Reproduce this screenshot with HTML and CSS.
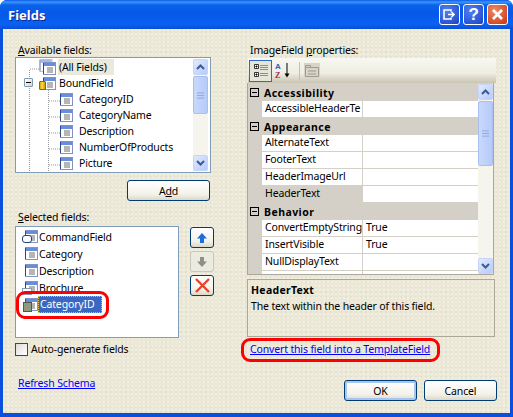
FILE: index.html
```html
<!DOCTYPE html>
<html lang="en">
<head>
<meta charset="utf-8">
<title>Fields</title>
<link rel="stylesheet" href="styles.css">
</head>
<body>
<svg class="defs" width="0" height="0" aria-hidden="true">
  <defs>
    <symbol id="doc" viewBox="0 0 13 13">
      <rect x=".5" y=".5" width="12" height="12" fill="#fff" stroke="#7f93c4"/>
      <rect x="1" y="1" width="11" height="3" fill="#6a8cdc"/>
      <path d="M4 6h6M4 8h6M4 10h6" stroke="#6d6d6d"/>
      <path d="M.5 1v11" stroke="#2c4a90"/>
    </symbol>
    <symbol id="arrow" viewBox="0 0 12 12">
      <path d="M6 1 11 6.500H8V11H4V6.500H1Z"/>
    </symbol>
    <symbol id="chev" viewBox="0 0 9 6">
      <path d="M1 5 4.500 1.500 8 5" fill="none" stroke="#3c5a94" stroke-width="2"/>
    </symbol>
    <symbol id="grip" viewBox="0 0 8 7">
      <path d="M0 .5h8M0 3.500h8M0 6.500h8" stroke="#8aa3dc"/>
    </symbol>
  </defs>
</svg>
<main class="window">
  <header class="titlebar">
    <h1 class="title">Fields</h1>
    <div class="caption-buttons">
      <span class="cap cap-blue"><svg width="13" height="11" viewBox="0 0 13 11"><path d="M8 2.500V1H1v9h7V8.500M5 5.500h6M8.500 3l2.500 2.500L8.500 8" fill="none" stroke="#fff" stroke-width="1.600"/></svg></span>
      <span class="cap cap-blue cap-help">?</span>
      <span class="cap cap-close"><svg width="13" height="13" viewBox="0 0 13 13"><path d="M2 2l9 9M11 2l-9 9" stroke="#fff" stroke-width="2.600"/></svg></span>
    </div>
  </header>
  <div class="content">
    <section class="left">
      <label class="lbl"><u>A</u>vailable fields:</label>
      <div class="box tree">
        <svg class="guides" width="60" height="116" aria-hidden="true"><path d="M13.500 12v103M14 11h10M33 27h-1M32.500 30v85M33 43h11M33 59h11M33 75h11M33 91h11M33 107h11" stroke="#9a9a9a" stroke-dasharray="1 1" fill="none"/></svg>
        <div class="tree-rows">
          <div class="trow t0"><svg class="ic ghost" width="14" height="13"><use href="#doc"/></svg><svg class="ic allf" width="13" height="13"><use href="#doc"/></svg><span class="tsel">(All Fields)</span></div>
          <div class="trow t0"><span class="minus"></span><span class="can"></span><svg class="ic boundf" width="13" height="13"><use href="#doc"/></svg><span class="ttxt">BoundField</span></div>
          <div class="trow t1"><svg class="ic" width="13" height="13"><use href="#doc"/></svg><span class="ttxt2">CategoryID</span></div>
          <div class="trow t1"><svg class="ic" width="13" height="13"><use href="#doc"/></svg><span class="ttxt2">CategoryName</span></div>
          <div class="trow t1"><svg class="ic" width="13" height="13"><use href="#doc"/></svg><span class="ttxt2">Description</span></div>
          <div class="trow t1"><svg class="ic" width="13" height="13"><use href="#doc"/></svg><span class="ttxt2">NumberOfProducts</span></div>
          <div class="trow t1"><svg class="ic" width="13" height="13"><use href="#doc"/></svg><span class="ttxt2">Picture</span></div>
        </div>
        <div class="sb sb-tree">
          <span class="sb-btn"><svg width="9" height="6"><use href="#chev"/></svg></span>
          <span class="sb-thumb thumb-tree"><svg width="7" height="7"><use href="#grip"/></svg></span>
          <span class="sb-fill"></span>
          <span class="sb-btn flip"><svg width="9" height="6"><use href="#chev"/></svg></span>
        </div>
      </div>
      <button class="btn btn-add" type="button">A<u>d</u>d</button>
      <label class="lbl lbl-sel"><u>S</u>elected fields:</label>
      <div class="sel-row">
        <div class="box list">
          <div class="lrow"><span class="lic"><svg class="ic" width="13" height="13"><use href="#doc"/></svg><i class="cmd"></i></span><span>CommandField</span></div>
          <div class="lrow"><span class="lic"><svg class="ic" width="13" height="13"><use href="#doc"/></svg></span><span>Category</span></div>
          <div class="lrow"><span class="lic"><svg class="ic" width="13" height="13"><use href="#doc"/></svg></span><span>Description</span></div>
          <div class="lrow"><span class="lic"><svg class="ic" width="13" height="13"><use href="#doc"/></svg><i class="img"></i></span><span>Brochure</span></div>
          <div class="lrow"><span class="lic"><svg class="ic" width="13" height="13"><use href="#doc"/></svg><i class="tpl"></i></span><span class="lsel">CategoryID</span></div>
        </div>
        <div class="movers">
          <button class="mv" type="button"><svg class="up" width="12" height="12"><use href="#arrow"/></svg></button>
          <button class="mv mv-off" type="button"><svg class="down" width="12" height="12"><use href="#arrow"/></svg></button>
          <button class="mv" type="button"><svg width="17" height="17" viewBox="0 0 17 17"><path d="M2 2l13 13M15 2 2 15" stroke="#e8432a" stroke-width="2.400"/></svg></button>
        </div>
      </div>
      <div class="auto"><span class="check"></span><span>Auto-generate fields</span></div>
      <a class="link refresh" href="#">Refresh Schema</a>
    </section>
    <section class="right">
      <label class="lbl lbl-r">ImageField <u>p</u>roperties:</label>
      <div class="toolbar">
        <span class="tool tool-on">
          <svg width="14" height="14" viewBox="0 0 14 14"><path d="M.5.5h4v4h-4zM.5 8.500h4v4h-4z" fill="#fff" stroke="#333"/><path d="M1.500 2.500h2M2.500 1.500v2M1.500 10.500h2M2.500 9.500v2" stroke="#000"/><path d="M6 1.500h8M6 3.500h8M6 5.500h8M6 9.500h8M6 11.500h8" stroke="#7d8fb3"/></svg>
        </span>
        <span class="tool tool-az">
          <svg width="16" height="17" viewBox="0 0 16 17"><text x="0" y="7" class="az-a">A</text><text x="0" y="16" class="az-z">Z</text><path d="M12 1v12" stroke="#000"/><path d="M9.500 11.500h5L12 15.500z"/></svg>
        </span>
        <span class="tool-sep"></span>
        <span class="tool tool-off">
          <svg width="14" height="12" viewBox="0 0 14 12"><path d="M.5 2.500h13v9H.5zM.5.500h5v2h-5z" fill="#d8d4c6" stroke="#9c9c94"/><path d="M3 6h8M3 9h8" stroke="#9c9c94"/></svg>
        </span>
      </div>
      <div class="grid">
        <div class="grows">
          <div class="gcat"><span class="gmin"></span><b>Accessibility</b></div>
          <div class="grow"><span class="gn">AccessibleHeaderTe</span><span class="gv"></span></div>
          <div class="gcat"><span class="gmin"></span><b>Appearance</b></div>
          <div class="grow"><span class="gn">AlternateText</span><span class="gv"></span></div>
          <div class="grow"><span class="gn">FooterText</span><span class="gv"></span></div>
          <div class="grow"><span class="gn">HeaderImageUrl</span><span class="gv"></span></div>
          <div class="grow grow-sel"><span class="gn">HeaderText</span><span class="gv"></span></div>
          <div class="gcat"><span class="gmin"></span><b>Behavior</b></div>
          <div class="grow"><span class="gn">ConvertEmptyString</span><span class="gv">True</span></div>
          <div class="grow"><span class="gn">InsertVisible</span><span class="gv">True</span></div>
          <div class="grow"><span class="gn">NullDisplayText</span><span class="gv"></span></div>
          <div class="grow"><span class="gn"></span><span class="gv"></span></div>
        </div>
        <div class="sb sb-grid">
          <span class="sb-btn"><svg width="9" height="6"><use href="#chev"/></svg></span>
          <span class="sb-thumb thumb-grid"><svg width="7" height="7"><use href="#grip"/></svg></span>
          <span class="sb-fill"></span>
          <span class="sb-btn flip"><svg width="9" height="6"><use href="#chev"/></svg></span>
        </div>
      </div>
      <div class="desc">
        <b>HeaderText</b>
        <p>The text within the header of this field.</p>
      </div>
      <a class="link convert" href="#">Convert this field into a TemplateField</a>
      <div class="actions">
        <button class="btn btn-act btn-default" type="button">OK</button>
        <button class="btn btn-act" type="button">Cancel</button>
      </div>
    </section>
    <span class="ring ring-item"></span>
    <span class="ring ring-link"></span>
  </div>
</main>
</body>
</html>
```
FILE: styles.css
```css
* { box-sizing: border-box; }
html, body { margin: 0; padding: 0; background: #fff; }
body { width: 513px; height: 417px; overflow: hidden; font: 10.5px/14px "Noto Sans", "DejaVu Sans", sans-serif; letter-spacing: -.15px; color: #000; }
.defs { position: absolute; }
.window { width: 513px; height: 417px; display: flex; flex-direction: column; background: #0a50dc; border-radius: 7px 7px 0 0; overflow: hidden; padding: 0 3px 4px; }
.titlebar { height: 29px; margin: 0 -3px; flex: none; display: flex; align-items: center; justify-content: space-between; padding: 0 5px 0 8px; background: linear-gradient(#0a5ae6 0, #3d95ff 2px, #0a62ea 5px, #0558e8 14px, #0a62f2 24px, #0a4fd8 29px); }
.title { margin: 0; font: bold 13px/18px "Noto Sans", sans-serif; letter-spacing: 0; color: #fff; text-shadow: 1px 1px 0 #0a2a8c; }
.caption-buttons { display: flex; gap: 3px; }
.cap { width: 21px; height: 21px; display: flex; align-items: center; justify-content: center; border: 1px solid #fff; border-radius: 3px; color: #fff; }
.cap-blue { background: radial-gradient(circle at 35% 30%, #4f82ee, #2a55d8 70%, #1e3fb8); }
.cap-help { font: bold 17px/19px "Liberation Sans", sans-serif; }
.cap-close { background: radial-gradient(circle at 35% 30%, #ec8a6a, #d8522c 65%, #b8371c); }
.content { flex: 1; position: relative; display: flex; padding: 14px 0 0 12px; background-color: #ebe8d9; background-image: radial-gradient(circle at 1px 1px, #f5f2dc .6px, transparent 1px), radial-gradient(circle at 3px 3px, #e0ddd2 .6px, transparent 1px); background-size: 4px 4px, 5px 5px; }
.left { width: 232px; flex: none; display: flex; flex-direction: column; }
.right { width: 250px; flex: none; display: flex; flex-direction: column; }
.lbl { height: 14px; padding-left: 3px; display: block; }
.box { background: #fff; border: 1px solid #7f9db9; }
.tree { width: 196px; height: 116px; position: relative; display: flex; justify-content: space-between; overflow: hidden; }
.guides { position: absolute; left: 0; top: 0; }
.tree-rows { position: relative; padding-top: 1px; }
.trow { height: 16px; display: flex; align-items: center; position: relative; white-space: nowrap; }
.t0 { padding-left: 43px; }
.t1 { padding-left: 44px; }
.ic { flex: none; display: block; }
.ghost { position: absolute; left: 23px; top: 0; opacity: .6; }
.allf { position: absolute; left: 27px; top: 3px; }
.boundf { position: absolute; left: 27px; top: 2px; }
.tsel { background: #ebe9da; padding: 1px 1px; height: 16px; width: 56px; margin-left: -1px; }
.ttxt2 { margin-left: 6px; }
.minus { position: absolute; left: 8px; top: 3px; width: 9px; height: 9px; border: 1px solid #7f9db9; border-radius: 1px; background: linear-gradient(135deg, #fff, #d8d4c4); }
.minus::after { content: ""; position: absolute; left: 1px; top: 3px; width: 5px; height: 1px; background: #000; }
.can { position: absolute; left: 23px; top: 6px; width: 7px; height: 9px; background: linear-gradient(90deg, #d6a400, #ffdc52 45%, #c79a00); border: 1px solid #8a6c00; border-radius: 1px; z-index: 1; }
.sb { flex: none; width: 15px; display: flex; flex-direction: column; align-items: stretch; background: #f6f5ed; }
.sb-tree { height: 112px; margin: 1px 2px 0 0; gap: 1px; }
.sb-grid { height: 190px; margin: 1px 1px 0 0; gap: 1px; }
.sb-btn { height: 16px; flex: none; display: flex; align-items: center; justify-content: center; background: linear-gradient(135deg, #e1eafe, #b6cbfb); border: 1px solid #c5d4f8; border-radius: 2px; }
.flip svg { transform: rotate(180deg); }
.sb-thumb { flex: none; display: flex; align-items: center; justify-content: center; background: linear-gradient(90deg, #c9d8fc, #b6cbfa); border: 1px solid #a9bff0; border-radius: 2px; }
.thumb-tree { height: 38px; }
.thumb-grid { height: 65px; }
.sb-fill { flex: 1; }
.btn { font: inherit; letter-spacing: inherit; color: #000; padding: 0; background: linear-gradient(#fff, #f3f2ea 70%, #dcd8c8); border: 1px solid #003c74; border-radius: 3px; }
.btn-add { width: 83px; height: 21px; margin: 7px 0 0 112px; }
.lbl-sel { margin-top: 9px; }
.sel-row { display: flex; margin-top: 2px; }
.list { width: 164px; height: 112px; padding-top: 1px; overflow: hidden; flex: none; }
.lrow { height: 17px; display: flex; align-items: center; padding-left: 6px; white-space: nowrap; }
.lic { width: 17px; height: 16px; flex: none; position: relative; }
.lic .ic { position: absolute; left: 3px; top: 1px; }
.cmd { position: absolute; left: 0; top: 6px; width: 10px; height: 8px; border: 1px solid #1f3f86; border-radius: 3px; background: #fff; }
.img { position: absolute; left: 0; top: 8px; width: 10px; height: 7px; border: 1px solid #8899bb; background: #fff; }
.tpl { position: absolute; left: 1px; top: 5px; width: 9px; height: 10px; border: 1px solid #555; background: #8e9a80; }
.lsel { background: #3a68c0; color: #fff; width: 64px; height: 17px; padding: 1px 2px; outline: 1px dotted #d8c058; outline-offset: -1px; margin-left: -1px; }
.movers { display: flex; flex-direction: column; gap: 3px; margin: 1px 0 0 11px; }
.mv { width: 24px; height: 21px; padding: 0; display: flex; align-items: center; justify-content: center; background: linear-gradient(#fff, #f3f2ea 70%, #dcd8c8); border: 1px solid #003c74; border-radius: 3px; }
.mv-off { border-color: #c9c7ba; background: #ecebe0; }
.up { fill: #1a6ede; }
.down { fill: #8f8f88; transform: rotate(180deg); }
.auto { display: flex; align-items: center; gap: 3px; height: 14px; margin-top: 4px; }
.check { width: 13px; height: 13px; border: 1px solid #1c5180; background: linear-gradient(135deg, #dcdcd7, #fff); }
.link { color: #0000ff; text-decoration: underline; }
.refresh { margin: 20px 0 0 3px; align-self: flex-start; }
.toolbar { width: 248px; height: 25px; margin: 1px 0 0 1px; display: flex; align-items: center; padding-left: 1px; background: linear-gradient(#f8f7f1, #f0eee3 60%, #c9c5b2); }
.tool { height: 22px; display: flex; align-items: center; justify-content: center; }
.tool-on { width: 23px; background: #e6e5da; border: 1px solid #316ac5; }
.tool-az { width: 19px; margin-left: 1px; }
.tool-sep { width: 1px; height: 18px; margin-left: 7px; background: #c4c1b0; }
.tool-off { background: #d8d4c6; width: 16px; height: 16px; margin-left: 4px; }
.az-a { font: bold 8px "Liberation Sans", sans-serif; fill: #2f5fc4; letter-spacing: 0; }
.az-z { font: bold 8px "Liberation Serif", serif; fill: #a62a3c; letter-spacing: 0; }
.grid { width: 247px; height: 192px; display: flex; background: #d4d0c8; border: 1px solid #aca899; border-top: 0; overflow: hidden; }
.grows { width: 230px; flex: none; padding-top: 1px; }
.gcat { height: 17px; display: flex; align-items: center; background: #d4d0c8; }
.gcat b { margin-left: 5px; letter-spacing: .45px; }
.gmin { width: 9px; height: 9px; border: 1px solid #000; margin-left: 2px; position: relative; flex: none; }
.gmin::after { content: ""; position: absolute; left: 1px; top: 3px; width: 5px; height: 1px; background: #000; }
.grow { height: 17px; display: flex; padding-left: 14px; }
.gn { width: 101px; flex: none; height: 16px; background: #fff; padding-left: 3px; border-right: 1px solid #d4d0c8; overflow: hidden; white-space: nowrap; }
.gv { flex: 1; height: 16px; background: #fff; padding-left: 3px; }
.grow-sel .gn { background: #d4d0c8; }
.desc { width: 248px; height: 58px; margin-top: 4px; padding: 3px 3px; border: 1px solid #aca899; }
.desc b { display: block; height: 15px; letter-spacing: .3px; }
.desc p { margin: 1px 0 0; }
.convert { margin: 5px 0 0 3px; align-self: flex-start; }
.actions { display: flex; gap: 7px; margin: 24px 0 0 97px; }
.btn-act { width: 73px; height: 21px; }
.btn-default { box-shadow: inset 0 0 0 2px #a9c4ef; }
.ring { position: absolute; border: 3px solid #f00; border-radius: 9px; }
.ring-item { left: 13px; top: 262px; width: 93px; height: 28px; }
.ring-link { left: 238px; top: 309px; width: 199px; height: 24px; }
```
